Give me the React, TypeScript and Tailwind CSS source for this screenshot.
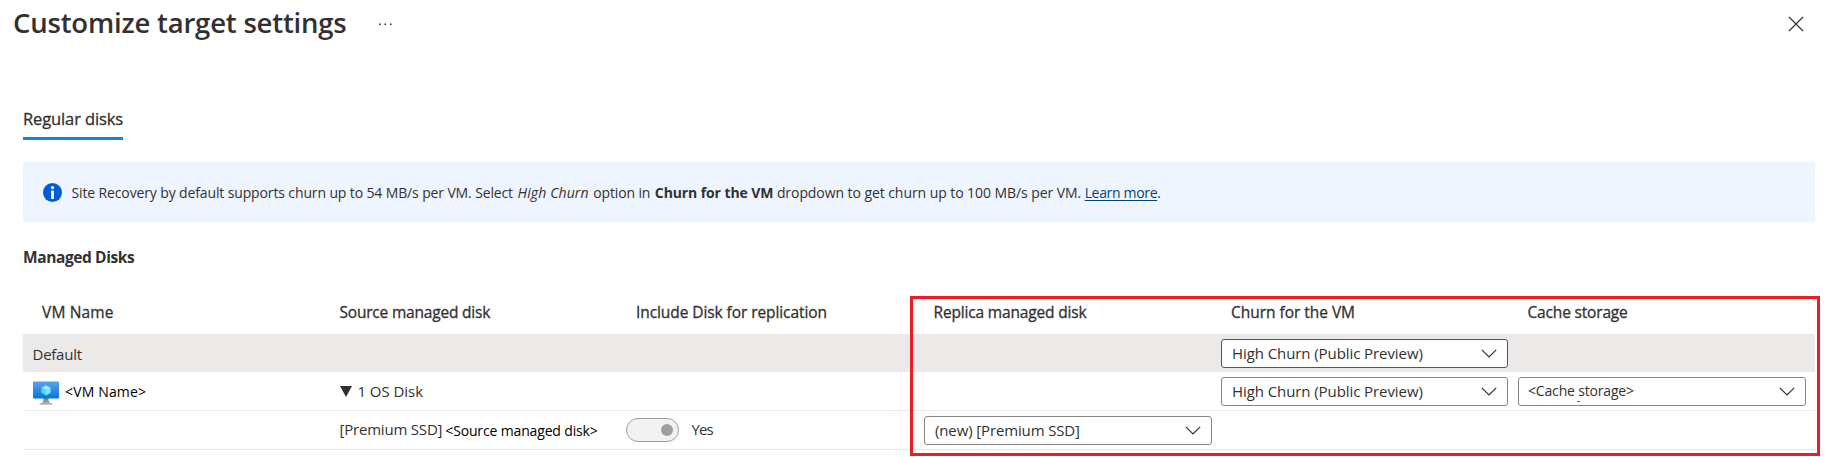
import React from "react";

function Chevron() {
  return (
    <svg width="16" height="9" viewBox="0 0 16 9" fill="none" className="shrink-0">
      <path d="M0.8 0.8 8 8 15.2 0.8" stroke="#323130" strokeWidth="1.2" />
    </svg>
  );
}

function Dropdown({ children, className = "" }: { children: React.ReactNode; className?: string }) {
  return (
    <button
      type="button"
      className={`flex h-[29px] items-center justify-between rounded-[3px] border bg-white px-[10px] text-left whitespace-nowrap ${className}`}
    >
      {children}
      <Chevron />
    </button>
  );
}

function VmIcon() {
  return (
    <svg width="26" height="24" viewBox="0 0 26 24" className="mt-[4px] shrink-0">
      <defs>
        <linearGradient id="screen" x1="0" y1="0" x2="0" y2="1">
          <stop offset="0" stopColor="#5ea0ef" />
          <stop offset="1" stopColor="#0078d4" />
        </linearGradient>
        <linearGradient id="stand" x1="0" y1="0" x2="0" y2="1">
          <stop offset="0" stopColor="#707070" />
          <stop offset="1" stopColor="#c8c8c8" />
        </linearGradient>
      </defs>
      <path d="M10.5 17h5c0 3.400 .8 5 3.800 5.500V24H6.700v-1.500c3-.5 3.800-2.100 3.800-5.500z" fill="url(#stand)" />
      <rect x="0" y="0.500" width="26" height="17" rx="0.900" fill="url(#screen)" />
      <path d="M13 4.200 17.600 6.700 13 9.300 8.400 6.700z" fill="#9cebff" />
      <path d="M8.400 6.700 13 9.300V14.500L8.400 11.800z" fill="#50d8f5" />
      <path d="M17.600 6.700 13 9.300V14.500L17.600 11.800z" fill="#7de3fa" />
    </svg>
  );
}

const row = "grid grid-cols-[298px_296px_299px_297px_297px_1fr]";

export default function App() {
  return (
    <div className="relative h-[457px] w-[1828px] overflow-hidden bg-white font-['Open_Sans','Noto_Sans',sans-serif] text-[15px] text-[#323130]">
      <header className="flex h-[48px] items-center justify-between pr-[24px] pl-[13px]">
        <div className="flex items-center">
          <h1 className="w-[366px] pb-[2px] text-[27.5px] leading-[44px] font-semibold tracking-[-0.200px] whitespace-nowrap">
            Customize target settings
          </h1>
          <svg width="13" height="3" viewBox="0 0 13 3" fill="#323130">
            <rect x="0" y="0.500" width="1.600" height="1.600" />
            <rect x="5.500" y="0.500" width="1.600" height="1.600" />
            <rect x="11" y="0.500" width="1.600" height="1.600" />
          </svg>
        </div>
        <svg width="16" height="16" viewBox="0 0 16 16" stroke="#323130" strokeWidth="1.200">
          <path d="M1 1 15 15M15 1 1 15" />
        </svg>
      </header>

      <main className="pr-[13px] pl-[23px]">
        <div className="flex h-[114px] items-start pt-[56px]">
          <div className="h-[36px] w-[100px] border-b-[3px] border-[#1584da] text-[16.5px] leading-[30px] tracking-[-0.120px] whitespace-nowrap [-webkit-text-stroke:0.3px_#323130]">
            Regular disks
          </div>
        </div>

        <div className="flex h-[60px] items-center rounded-[3px] bg-[#eff5ff] pl-[20px] text-[14px]">
          <svg width="19" height="19" viewBox="0 0 19 19" className="mr-[9.500px] shrink-0">
            <circle cx="9.500" cy="9.500" r="9.500" fill="#015cda" />
            <circle cx="9.500" cy="4.600" r="1.600" fill="#fff" />
            <path d="M8.100 7.500h2.800v8.500H8.100z" fill="#fff" />
          </svg>
          <p className="pt-[1px] tracking-[-0.130px] whitespace-nowrap">
            Site Recovery by default supports churn up to 54 MB/s per VM. Select{" "}
            <i className="ml-[1px] tracking-[0.120px]">High Churn</i>
            <span className="ml-[1px]"> option in </span>
            <b className="ml-[1px] tracking-[-0.100px]">Churn for the VM</b>
            <span className="tracking-[-0.070px]"> dropdown to get churn up to 100 MB/s per VM. </span>
            <a className="tracking-[-0.330px] text-[#004578] underline underline-offset-2">Learn more</a>.
          </p>
        </div>

        <h2 className="h-[74px] pt-[21px] text-[15.5px] leading-[29px] font-bold tracking-[-0.4px]">Managed Disks</h2>

        <div
          className={`${row} h-[38px] text-[15.5px] leading-[33px] whitespace-nowrap [-webkit-text-stroke:0.3px_#323130]`}
        >
          <div className="pl-[19px] tracking-[0.150px]">VM Name</div>
          <div className="pl-[18.500px] tracking-[-0.200px]">Source managed disk</div>
          <div className="pl-[19px] tracking-[-0.080px]">Include Disk for replication</div>
          <div className="pl-[17.500px] tracking-[-0.160px]">Replica managed disk</div>
          <div className="pl-[18px] tracking-[-0.030px]">Churn for the VM</div>
          <div className="pl-[17.500px] tracking-[-0.170px]">Cache storage</div>
        </div>

        <div className={`${row} h-[38px] items-center bg-[#ebeae9]`}>
          <div className="pt-[2px] pl-[9.500px] tracking-[-0.250px]">Default</div>
          <Dropdown className="col-start-5 ml-[8px] h-[28px] w-[287px] border-[#8a2da5] tracking-[-0.080px]">
            High Churn (Public Preview)
          </Dropdown>
        </div>

        <div className={`${row} h-[39px] items-center border-b border-[#edebe9]`}>
          <div className="flex items-center pl-[9.500px] text-[14px] tracking-[0.160px] text-black">
            <VmIcon />
            <span className="pl-[6.500px]">&lt;VM Name&gt;</span>
          </div>
          <div className="flex items-center gap-[5.500px] pl-[19px] tracking-[-0.050px]">
            <svg width="12" height="11" viewBox="0 0 12 11">
              <path d="M0 0H12L6 11z" fill="#323130" />
            </svg>
            1 OS Disk
          </div>
          <Dropdown className="col-start-5 ml-[8px] w-[287px] border-[#868482] tracking-[-0.080px]">
            High Churn (Public Preview)
          </Dropdown>
          <Dropdown className="col-start-6 ml-[8px] w-[288px] border-[#868482] text-[14px] tracking-[-0.170px]">
            <span className="-ml-px pb-[2px]">&lt;Cache storage&gt;</span>
          </Dropdown>
        </div>

        <div className={`${row} h-[39px] items-center border-b border-[#edebe9]`}>
          <div className="col-start-2 flex items-center gap-[3px] pl-[18.500px] whitespace-nowrap">
            <span className="pb-[1px] tracking-[-0.200px]">[Premium SSD]</span>
            <span className="pt-[1px] text-[14px] tracking-[-0.150px] text-black">&lt;Source managed disk&gt;</span>
          </div>
          <div className="flex items-center pl-[9px]">
            <div className="flex h-[24px] w-[53px] items-center justify-end rounded-full border border-[#a19f9d] bg-[#f3f2f1] pr-[5px]">
              <div className="size-[12px] rounded-full bg-[#a19f9d]" />
            </div>
            <span className="pb-[1px] pl-[12.500px] tracking-[-0.900px]">Yes</span>
          </div>
          <Dropdown className="ml-[8px] w-[288px] border-[#868482] tracking-[-0.130px]">(new) [Premium SSD]</Dropdown>
        </div>
      </main>

      <div className="pointer-events-none absolute top-[296px] left-[910px] h-[160px] w-[910px] border-[3px] border-[#ed1c24]" />
      <div className="absolute top-[401px] left-[1577px] h-px w-[3px] bg-[#605e5c]" />
    </div>
  );
}
